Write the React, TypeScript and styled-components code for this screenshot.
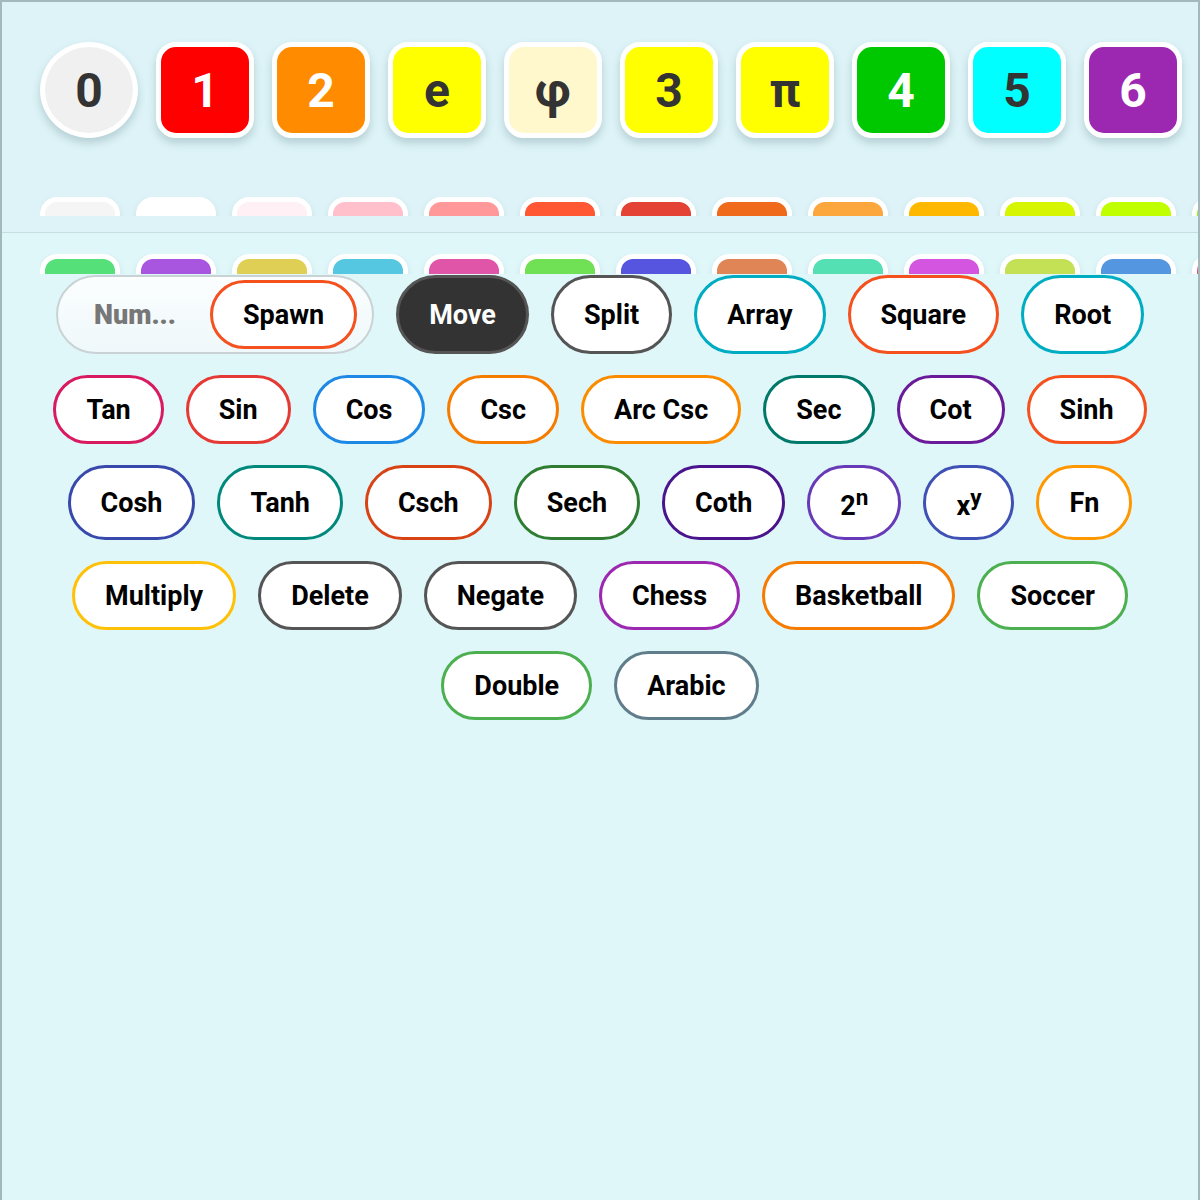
import styled, { createGlobalStyle } from "styled-components";

const GlobalStyle = createGlobalStyle`
  html, body {
    margin: 0;
    padding: 0;
    background: #e0f7fa;
  }
  * {
    box-sizing: border-box;
  }
  body {
    font-family: Roboto, "Liberation Sans", Arial, sans-serif;
  }
`;

const Frame = styled.div`
  min-height: 1200px;
  border: 2px solid #a3b7bc;
  border-bottom: none;
  background: #e0f7fa;
  overflow: hidden;
`;

const TopSection = styled.div`
  background: #ddf3f7;
  padding: 40px 0 16px 38px;
  border-bottom: 1px solid #c6dde2;
`;

const BigRow = styled.div`
  display: flex;
  gap: 18px;
`;

const BigTile = styled.div<{ $bg: string; $fg: string; $round?: boolean }>`
  flex: 0 0 auto;
  width: 98px;
  height: 96px;
  display: flex;
  align-items: center;
  justify-content: center;
  background: ${(p) => p.$bg};
  color: ${(p) => p.$fg};
  border: 5px solid #fff;
  border-radius: ${(p) => (p.$round ? "50%" : "20px")};
  box-shadow: 0 5px 9px rgba(40, 80, 90, 0.22);
  font-size: 48px;
  font-weight: 700;
`;

const Strip = styled.div<{ $top: number; $height: number }>`
  display: flex;
  gap: 16px;
  margin-top: ${(p) => p.$top}px;
  height: ${(p) => p.$height}px;
  overflow: hidden;
`;

const StripWrap = styled.div`
  padding: 21px 0 0 38px;
`;

const SmallTile = styled.div<{ $bg: string }>`
  flex: 0 0 auto;
  width: 80px;
  height: 80px;
  background: ${(p) => p.$bg};
  border: 5px solid #fff;
  border-radius: 17px;
  box-shadow: 0 3px 6px rgba(40, 80, 90, 0.12);
`;

const Panel = styled.div`
  display: flex;
  flex-wrap: wrap;
  justify-content: center;
  gap: 21px 22px;
  padding: 1px 0 40px;
  background: #e0f7fa;
`;

const Group = styled.div`
  display: flex;
  align-items: center;
  padding: 3px 15px 3px 36px;
  border: 2px solid #c9d3d5;
  border-radius: 999px;
  background: linear-gradient(180deg, #fbfeff 0%, #eff8fa 100%);
`;

const GroupLabel = styled.span`
  margin-right: 34px;
  color: #777;
  font-size: 27px;
  font-weight: 900;
`;

const Pill = styled.button<{ $color: string; $dark?: boolean }>`
  padding: 15.5px 30px;
  border: 3px solid ${(p) => p.$color};
  border-radius: 999px;
  background: ${(p) => (p.$dark ? "#333" : "#fff")};
  color: ${(p) => (p.$dark ? "#fff" : "#000")};
  font-family: Roboto, "Liberation Sans", Arial, sans-serif;
  font-size: 27px;
  font-weight: 700;
  line-height: normal;
  cursor: pointer;
  white-space: nowrap;
`;

const bigTiles = [
  { label: "0", bg: "#f0f0f0", fg: "#333", round: true },
  { label: "1", bg: "#ff0000", fg: "#fff" },
  { label: "2", bg: "#ff8c00", fg: "#fff" },
  { label: "e", bg: "#ffff00", fg: "#333" },
  { label: "φ", bg: "#fff8cc", fg: "#333" },
  { label: "3", bg: "#ffff00", fg: "#333" },
  { label: "π", bg: "#ffff00", fg: "#333" },
  { label: "4", bg: "#00c800", fg: "#fff" },
  { label: "5", bg: "#00ffff", fg: "#333" },
  { label: "6", bg: "#9c27b0", fg: "#fff" },
];

const paleTiles = [
  "#f5f5f5", "#ffffff", "#fff0f5", "#ffc0cb", "#ff9999", "#ff5733", "#e34234",
  "#ef6a1a", "#fca73e", "#ffb800", "#d6f500", "#bfff00", "#80ff00",
];

const vividTiles = [
  "#55e07a", "#a855e0", "#e0cf55", "#55c7e0", "#e055a8", "#70e055", "#5555e0",
  "#e08555", "#55e0b3", "#d455e0", "#c4e055", "#5596e0", "#e05570",
];

type Btn = { label: React.ReactNode; color: string; dark?: boolean };

const buttons: Btn[] = [
  { label: "Move", color: "#555", dark: true },
  { label: "Split", color: "#555" },
  { label: "Array", color: "#00acc1" },
  { label: "Square", color: "#f4511e" },
  { label: "Root", color: "#00acc1" },
  { label: "Tan", color: "#d81b60" },
  { label: "Sin", color: "#e53935" },
  { label: "Cos", color: "#1e88e5" },
  { label: "Csc", color: "#f57c00" },
  { label: "Arc Csc", color: "#fb8c00" },
  { label: "Sec", color: "#00796b" },
  { label: "Cot", color: "#6a1b9a" },
  { label: "Sinh", color: "#f4511e" },
  { label: "Cosh", color: "#3949ab" },
  { label: "Tanh", color: "#00897b" },
  { label: "Csch", color: "#d84315" },
  { label: "Sech", color: "#2e7d32" },
  { label: "Coth", color: "#4a148c" },
  { label: <>2<sup>n</sup></>, color: "#673ab7" },
  { label: <>x<sup>y</sup></>, color: "#3f51b5" },
  { label: "Fn", color: "#ff9800" },
  { label: "Multiply", color: "#ffc107" },
  { label: "Delete", color: "#555" },
  { label: "Negate", color: "#555" },
  { label: "Chess", color: "#9c27b0" },
  { label: "Basketball", color: "#f57c00" },
  { label: "Soccer", color: "#4caf50" },
  { label: "Double", color: "#4caf50" },
  { label: "Arabic", color: "#607d8b" },
];

const App = () => {
  return (
    <>
      <GlobalStyle />
      <Frame>
        <TopSection>
          <BigRow>
            {bigTiles.map((t) => (
              <BigTile key={t.label} $bg={t.bg} $fg={t.fg} $round={t.round}>
                {t.label}
              </BigTile>
            ))}
          </BigRow>
          <Strip $top={59} $height={19}>
            {paleTiles.map((c, i) => (
              <SmallTile key={i} $bg={c} />
            ))}
          </Strip>
        </TopSection>
        <StripWrap>
          <Strip $top={0} $height={20}>
            {vividTiles.map((c, i) => (
              <SmallTile key={i} $bg={c} />
            ))}
          </Strip>
        </StripWrap>
        <Panel>
          <Group>
            <GroupLabel>Num...</GroupLabel>
            <Pill $color="#f4511e">Spawn</Pill>
          </Group>
          {buttons.map((b, i) => (
            <Pill key={i} $color={b.color} $dark={b.dark}>
              {b.label}
            </Pill>
          ))}
        </Panel>
      </Frame>
    </>
  );
};

export default App;
